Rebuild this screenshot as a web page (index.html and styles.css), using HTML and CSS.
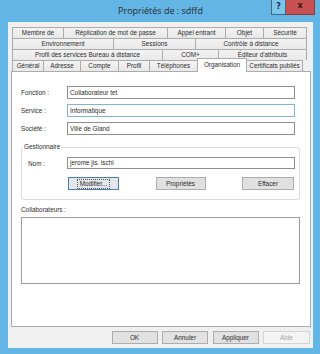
FILE: index.html
```html
<!DOCTYPE html>
<html lang="fr">
<head>
<meta charset="utf-8">
<title>Propriétés de : sdffd</title>
<link rel="stylesheet" href="styles.css">
</head>
<body>
<div class="window">
  <div class="titlebar">
    <div class="tb-spacer"></div>
    <div class="title">Propriétés de : sdffd</div>
    <div class="caption-btns">
      <div class="cb help">?</div>
      <div class="cb close">x</div>
    </div>
  </div>
  <div class="client">
    <div class="tabs">
      <div class="tabrow r1">
        <div class="tab">Membre de</div>
        <div class="tab">Réplication de mot de passe</div>
        <div class="tab">Appel entrant</div>
        <div class="tab">Objet</div>
        <div class="tab">Sécurité</div>
      </div>
      <div class="tabrow r2">
        <div class="tab">Environnement</div>
        <div class="tab">Sessions</div>
        <div class="tab">Contrôle à distance</div>
      </div>
      <div class="tabrow r3">
        <div class="tab">Profil des services Bureau à distance</div>
        <div class="tab">COM+</div>
        <div class="tab">Éditeur d'attributs</div>
      </div>
      <div class="tabrow r4">
        <div class="tab">Général</div>
        <div class="tab">Adresse</div>
        <div class="tab">Compte</div>
        <div class="tab">Profil</div>
        <div class="tab">Téléphones</div>
        <div class="tab sel">Organisation</div>
        <div class="tab">Certificats publiés</div>
      </div>
    </div>
    <div class="panel">
      <div class="field-row">
        <span class="lbl">Fonction :</span>
        <div class="input">Collaborateur tet</div>
      </div>
      <div class="field-row">
        <span class="lbl">Service :</span>
        <div class="input hot">Informatique</div>
      </div>
      <div class="field-row">
        <span class="lbl">Société :</span>
        <div class="input">Ville de Gland</div>
      </div>
      <div class="group">
        <div class="group-title">Gestionnaire</div>
        <div class="field-row nom">
          <span class="lbl">Nom :</span>
          <div class="input">jerome jis. ischi</div>
        </div>
        <div class="group-btns">
          <div class="btn focus"><span class="focus-ring">Modifier...</span></div>
          <div class="btn">Propriétés</div>
          <div class="btn wide">Effacer</div>
        </div>
      </div>
      <div class="collab-label">Collaborateurs :</div>
      <div class="listbox"></div>
    </div>
    <div class="footer">
      <div class="btn fbtn">OK</div>
      <div class="btn fbtn">Annuler</div>
      <div class="btn fbtn">Appliquer</div>
      <div class="btn fbtn disabled">Aide</div>
    </div>
  </div>
</div>
</body>
</html>
```

FILE: styles.css
```css
* { box-sizing: border-box; }
html, body {
  margin: 0;
  padding: 0;
  width: 320px;
  height: 354px;
  overflow: hidden;
  background: #62b5e5;
}
body {
  font-family: "Liberation Sans", Arial, sans-serif;
  font-size: 6.4px;
  color: #2e2e2e;
}
.window {
  width: 320px;
  height: 354px;
  background: #62b5e5;
  padding: 0 7px 6px 8px;
  display: flex;
  flex-direction: column;
}
.titlebar {
  height: 22px;
  display: grid;
  grid-template-columns: 1fr auto 1fr;
  flex: none;
}
.title {
  font-family: "Open Sans", "Noto Sans", sans-serif;
  font-size: 9px;
  line-height: 21px;
  color: #2b2b2b;
  white-space: nowrap;
}
.caption-btns {
  justify-self: end;
  display: flex;
  margin-right: -2px;
  align-self: start;
}
.cb {
  height: 15px;
  font-family: "DejaVu Sans", sans-serif;
  font-weight: bold;
  text-align: center;
  line-height: 13px;
}
.help {
  width: 15px;
  background: #7cc6ec;
  border: 1px solid #3e6a88;
  border-top: none;
  color: #1d2f55;
  font-size: 8px;
}
.close {
  width: 29px;
  background: #c75050;
  border: 1px solid #8e3a3a;
  border-left: none;
  border-top: none;
  color: #3a1414;
  font-size: 8px;
  line-height: 12px;
}
.client {
  flex: 1;
  background: #f0f0f0;
  border: none;
  padding: 5px 2px 4px 3px;
  display: flex;
  flex-direction: column;
}
.tabs {
  margin-left: 1px;
  height: 44px;
  flex: none;
}
.tabrow {
  display: flex;
  height: 11px;
}
.tab {
  height: 11px;
  border-top: 1px solid #acacac;
  border-right: 1px solid #acacac;
  background: linear-gradient(#f3f3f3, #e9e9e9);
  text-align: center;
  line-height: 10px;
  white-space: nowrap;
  overflow: hidden;
  flex: none;
}
.tab:first-child { border-left: 1px solid #acacac; }
.r1 .tab:nth-child(1) { width: 52px; }
.r1 .tab:nth-child(2) { width: 104px; }
.r1 .tab:nth-child(3) { width: 58px; }
.r1 .tab:nth-child(4) { width: 38px; }
.r1 .tab:nth-child(5) { width: 43px; }
.r2 .tab:nth-child(1) { width: 102px; }
.r2 .tab:nth-child(2) { width: 82px; }
.r2 .tab:nth-child(3) { width: 111px; }
.r3 .tab:nth-child(1) { width: 151px; }
.r3 .tab:nth-child(2) { width: 56px; }
.r3 .tab:nth-child(3) { width: 88px; }
.r4 .tab:nth-child(1) { width: 32px; }
.r4 .tab:nth-child(2) { width: 37px; }
.r4 .tab:nth-child(3) { width: 38px; }
.r4 .tab:nth-child(4) { width: 31px; }
.r4 .tab:nth-child(5) { width: 48px; }
.r4 .tab:nth-child(6) { width: 50px; }
.r4 .tab:nth-child(7) { width: 56px; }
.tab.sel {
  position: relative;
  z-index: 1;
  margin-top: -2px;
  margin-left: -1px;
  height: 14px;
  background: #ffffff;
  border-left: 1px solid #acacac;
  line-height: 11px;
}
.panel {
  height: 256px;
  flex: none;
  background: #ffffff;
  border: 1px solid #acacac;
  padding: 14px 0 0 9px;
  display: flex;
  flex-direction: column;
}
.field-row {
  display: flex;
  align-items: center;
  height: 13px;
  margin-bottom: 5px;
}
.lbl {
  width: 46px;
  flex: none;
  white-space: nowrap;
}
.input {
  width: 228px;
  height: 13px;
  border: 1px solid #8f8f8f;
  background: #fff;
  padding-left: 2px;
  line-height: 11px;
  white-space: nowrap;
}
.input.hot { border-color: #7eb4d6; }
.group {
  width: 279px;
  margin-top: 7px;
  border: 1px solid #dcdcdc;
  border-radius: 3px;
  padding: 0 0 9px 0;
}
.group-title {
  width: fit-content;
  margin: -5px 0 0 1px;
  padding: 0 1px;
  line-height: 8px;
  background: #fff;
}
.field-row.nom {
  margin: 6px 0 0 0;
  padding-left: 6px;
  height: 12px;
}
.nom .lbl { width: 39px; }
.nom .input { height: 12px; line-height: 10px; }
.group-btns {
  display: flex;
  justify-content: space-between;
  margin: 8px 0 0 46px;
  width: 226px;
}
.btn {
  height: 13px;
  width: 50px;
  background: #e1e1e1;
  border: 1px solid #adadad;
  text-align: center;
  line-height: 11px;
  white-space: nowrap;
  display: flex;
  justify-content: center;
  align-items: center;
}
.btn.focus {
  width: 51px;
  border-color: #4a7fb0;
  background: #e3e6ea;
}
.btn.wide { width: 52px; }
.focus-ring {
  border: 1px dotted #555;
  padding: 0 2px;
  line-height: 8px;
}
.collab-label {
  margin-top: 6px;
  line-height: 8px;
}
.listbox {
  margin-top: 3px;
  width: 279px;
  height: 67px;
  border: 1px solid #9d9d9d;
  background: #fff;
}
.footer {
  display: flex;
  justify-content: flex-end;
  gap: 4.5px;
  margin-top: 4px;
  padding-right: 1px;
  flex: none;
}
.fbtn { width: 46px; }
.fbtn.disabled {
  width: 47px;
  background: #f4f4f4;
  border-color: #d5d5d5;
  color: #a3a3a3;
}
```
